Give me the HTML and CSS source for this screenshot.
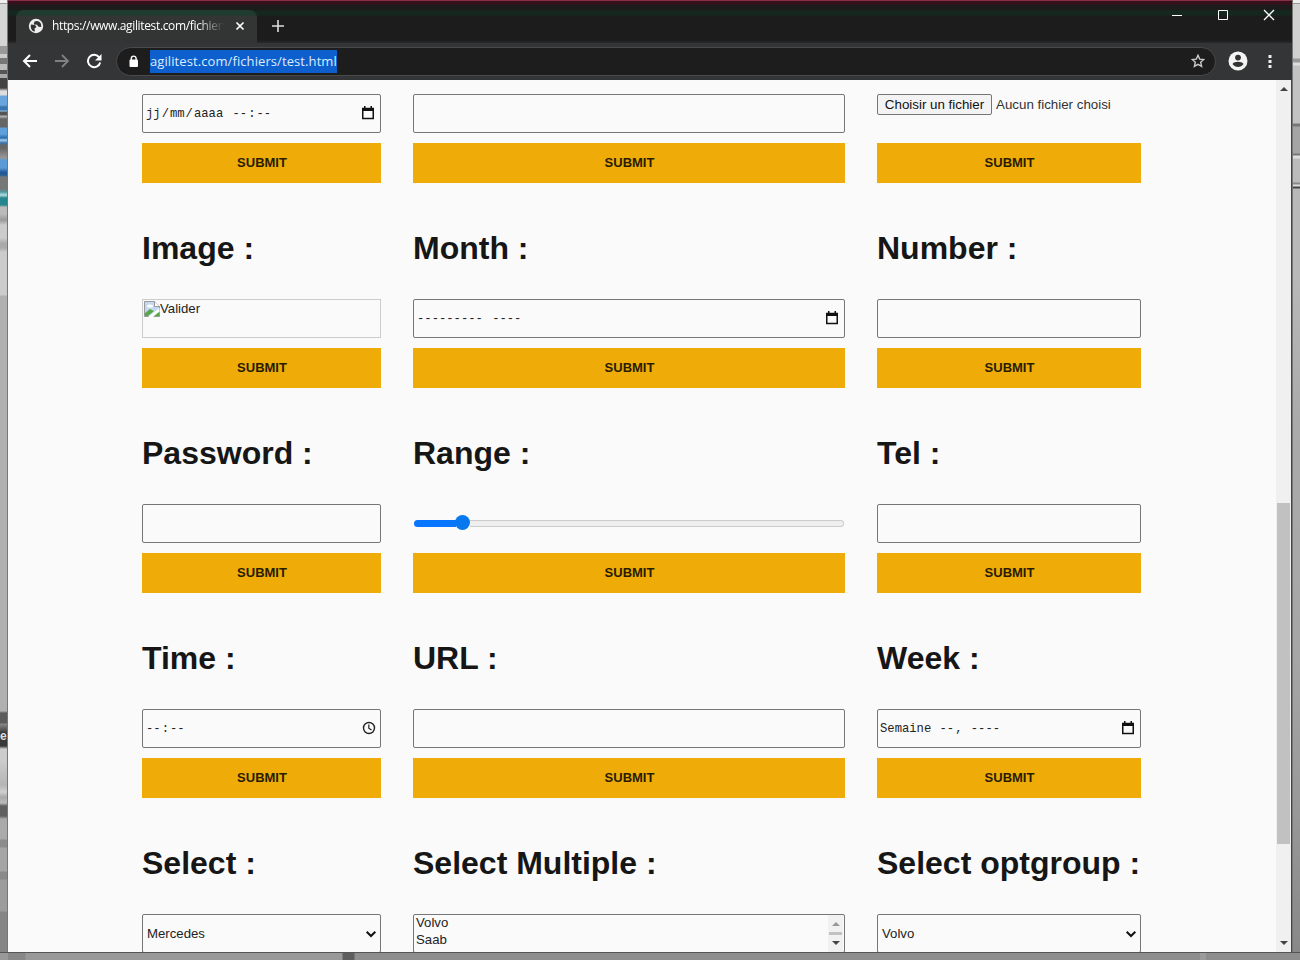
FILE: index.html
```html
<!DOCTYPE html>
<html lang="fr">
<head>
<meta charset="utf-8">
<title>https://www.agilitest.com/fichiers/test.html</title>
<link rel="stylesheet" href="styles.css">
</head>
<body>
<div class="desk">
  <div class="side side-left"><span class="side-letter">e</span></div>
  <div class="window">
    <header class="tabstrip">
      <div class="tab">
        <svg class="globe" width="16" height="16" viewBox="0 0 16 16"><circle cx="8" cy="8" r="7.200" fill="#eee"/><path d="M3 6.500l4 .5 1.500 2-2 1.500.5 3C4 13.500 2 10 3 6.500zM6.500 3.500c2.500-1.500 5.500 0 6.500 2.500l.3 3-2.800-.3-1.500-2-3-.2c-.5-1.500.5-1.700.5-3z" fill="#333"/></svg>
        <span class="tab-title">https://www.agilitest.com/fichiers</span>
        <svg class="tab-close" width="10" height="10" viewBox="0 0 10 10"><path d="M1.500 1.500l7 7M8.500 1.500l-7 7" stroke="#fff" stroke-width="1.700"/></svg>
      </div>
      <svg class="new-tab" width="14" height="14" viewBox="0 0 14 14"><path d="M7 1v12M1 7h12" stroke="#ddd" stroke-width="1.600"/></svg>
      <div class="controls">
        <svg width="12" height="12" viewBox="0 0 12 12"><path d="M1 6.500h10" stroke="#fff"/></svg>
        <svg width="12" height="12" viewBox="0 0 12 12"><path d="M1.500 1.500h9v9h-9z" stroke="#fff" fill="none"/></svg>
        <svg width="12" height="12" viewBox="0 0 12 12"><path d="M1 1l10 10M11 1L1 11" stroke="#fff" stroke-width="1.300"/></svg>
      </div>
    </header>
    <div class="toolbar">
      <svg class="nav" width="16" height="16" viewBox="0 0 16 16"><path d="M15 8H2M8 2L2 8l6 6" stroke="#fff" stroke-width="2" fill="none"/></svg>
      <svg class="nav" width="16" height="16" viewBox="0 0 16 16"><path d="M1 8h13M8 2l6 6-6 6" stroke="#808182" stroke-width="1.800" fill="none"/></svg>
      <svg class="nav" width="16" height="16" viewBox="0 0 16 16"><path d="M13.300 4.500A6.200 6.200 0 1 0 14.200 9.500" stroke="#fff" stroke-width="2" fill="none"/><path d="M15.500 1v6.500H9z" fill="#fff"/></svg>
      <div class="omnibox">
        <svg width="10" height="13" viewBox="0 0 10 13"><rect x=".5" y="4.500" width="8.500" height="7.500" rx="1" fill="#fff"/><path d="M2.300 5V3.500a2.400 2.400 0 0 1 4.800 0V5" stroke="#fff" stroke-width="1.400" fill="none"/></svg>
        <span class="address">agilitest.com/fichiers/test.html</span>
        <svg class="star" width="14" height="14" viewBox="0 0 14 14"><path d="M7 1.300l1.700 3.800 4.100.4-3.100 2.800.9 4.100L7 10.300l-3.600 2.100.9-4.100L1.200 5.500l4.100-.4z" fill="none" stroke="#ccc" stroke-width="1.400"/></svg>
      </div>
      <svg class="profile" width="20" height="20" viewBox="0 0 20 20"><circle cx="10" cy="10" r="9.500" fill="#f4f4f4"/><circle cx="10" cy="6.600" r="2.900" fill="#333"/><path d="M4.500 13c1.500-3 9.500-3 11 0-2.500 4-8.500 4-11 0z" fill="#333"/></svg>
      <svg class="kebab" width="4" height="16" viewBox="0 0 4 16"><path d="M.5 2h3v3h-3zM.5 7h3v3h-3zM.5 12h3v3h-3z" fill="#eee"/></svg>
    </div>
    <div class="viewport">
      <main class="grid">
        <section class="cell cell-first">
          <div class="field mono"><span><i>jj</i>/<i>mm</i>/<i>aaaa</i> <i>--</i>:<i>--</i></span><svg class="ico" width="14" height="14" viewBox="0 0 14 14"><path d="M1.750 2.500h10.500v10H1.750z" fill="none" stroke="#111" stroke-width="1.500"/><path d="M1 2h12v3H1zM3 0h1.500v2H3zM9.500 0H11v2H9.500z" fill="#111"/></svg></div>
          <div class="submit">SUBMIT</div>
        </section>
        <section class="cell cell-first"><div class="field"></div><div class="submit">SUBMIT</div></section>
        <section class="cell cell-first">
          <div class="file"><span class="file-button">Choisir un fichier</span><span>Aucun fichier choisi</span></div>
          <div class="submit">SUBMIT</div>
        </section>

        <section class="cell"><h1>Image :</h1>
          <div class="field broken"><svg width="16" height="16" viewBox="0 0 16 16"><path d="M.5.500h10l5 5v10H.5z" fill="#c3d9f3" stroke="#999"/><path d="M10.500.500v5h5" fill="#fff" stroke="#999"/><ellipse cx="6" cy="5" rx="3" ry="1.500" fill="#fff"/><path d="M1 15v-3l5-4 4 2-6 5z" fill="#57a849"/><path d="M4 16L15.500 7v4L9 16z" fill="#fff"/><path d="M10 15l5-4v4z" fill="#57a849"/></svg><span>Valider</span></div>
          <div class="submit">SUBMIT</div></section>
        <section class="cell"><h1>Month :</h1>
          <div class="field mono"><span><i>---------</i> <i>----</i></span><svg class="ico" width="14" height="14" viewBox="0 0 14 14"><path d="M1.750 2.500h10.500v10H1.750z" fill="none" stroke="#111" stroke-width="1.500"/><path d="M1 2h12v3H1zM3 0h1.500v2H3zM9.500 0H11v2H9.500z" fill="#111"/></svg></div>
          <div class="submit">SUBMIT</div></section>
        <section class="cell"><h1>Number :</h1><div class="field"></div><div class="submit">SUBMIT</div></section>

        <section class="cell"><h1>Password :</h1><div class="field"></div><div class="submit">SUBMIT</div></section>
        <section class="cell"><h1>Range :</h1>
          <div class="range"><div class="range-fill"></div><div class="range-thumb"></div><div class="range-rest"></div></div>
          <div class="submit">SUBMIT</div></section>
        <section class="cell"><h1>Tel :</h1><div class="field"></div><div class="submit">SUBMIT</div></section>

        <section class="cell"><h1>Time :</h1>
          <div class="field mono"><span><i>--</i>:<i>--</i></span><svg class="ico clock" width="14" height="14" viewBox="0 0 14 14"><circle cx="7" cy="7" r="5.500" fill="none" stroke="#222" stroke-width="1.400"/><path d="M6.800 3.500v3.700l2.700 1.800" fill="none" stroke="#222" stroke-width="1.200"/></svg></div>
          <div class="submit">SUBMIT</div></section>
        <section class="cell"><h1>URL :</h1><div class="field"></div><div class="submit">SUBMIT</div></section>
        <section class="cell"><h1>Week :</h1>
          <div class="field mono"><span>Semaine <i>--</i>, <i>----</i></span><svg class="ico" width="14" height="14" viewBox="0 0 14 14"><path d="M1.750 2.500h10.500v10H1.750z" fill="none" stroke="#111" stroke-width="1.500"/><path d="M1 2h12v3H1zM3 0h1.500v2H3zM9.500 0H11v2H9.500z" fill="#111"/></svg></div>
          <div class="submit">SUBMIT</div></section>

        <section class="cell"><h1>Select :</h1>
          <div class="field select"><span>Mercedes</span><svg width="12" height="8" viewBox="0 0 12 8"><path d="M1.700 1.700L6 6l4.300-4.300" fill="none" stroke="#111" stroke-width="2"/></svg></div></section>
        <section class="cell"><h1>Select Multiple :</h1>
          <div class="field list"><div class="options"><span>Volvo</span><span>Saab</span><span>Mercedes</span></div>
            <div class="list-bar"><b class="up dim"></b><b class="list-thumb"></b><b class="down"></b></div></div></section>
        <section class="cell"><h1>Select optgroup :</h1>
          <div class="field select"><span>Volvo</span><svg width="12" height="8" viewBox="0 0 12 8"><path d="M1.700 1.700L6 6l4.300-4.300" fill="none" stroke="#111" stroke-width="2"/></svg></div></section>
      </main>
      <div class="scrollbar"><b class="up"></b><b class="thumb"></b><b class="down"></b></div>
    </div>
  </div>
  <div class="side side-right"></div>
  <div class="bottom"></div>
</div>
</body>
</html>
```
FILE: styles.css
```css
* { box-sizing: border-box; }
body { margin: 0; font-family: "Liberation Sans", Arial, sans-serif; overflow: hidden; }
svg { display: block; flex: none; }
.desk { display: grid; grid-template-columns: 8px 1284px 8px; grid-template-rows: 952px 8px; width: 1300px; height: 960px; }

/* slivers of the windows behind */
.side-left {
  padding-top: 729px;
  border-right: 1px solid #777;
  background: linear-gradient(#eee 0 3px, #999 3px 4px, #d5d5d5 4px 46px, #999 46px 54px, #ccc 54px 58px, #777 58px 64px, #bbb 64px 70px, #555 70px 74px, #aaa 74px 78px, #444 78px 88px, #ddd 91px 95px, #69a4dc 96px 105px, #3a74ac 107px 110px, #9bc8ee 111px, #555 112px 115px, #bbb 116px, #666 119px 127px, #5f9fdb 128px 134px, #2869aa 138px, #a6cdec 140px, #3774ad 143px, #666 145px 148px, #999 158px, #5a9ad5 160px 168px, #225c98 172px 175px, #777 177px 189px, #4e9aa0 192px, #b4dfe0 195px, #26868e 198px 205px, #bbb 207px 214px, #999 220px, #ccc 225px 238px, #aaa 243px 248px, #ccc 252px 295px, #b0b0b0 296px 711px, #5c5c5c 713px 723px, #888 724px, #383838 733px 746px, #ccc 749px 760px, #b5b5b5 785px, #d0d0d0 792px, #aaa 797px, #bbb 803px, #606060 806px 816px, #aaa 819px 839px, #8c8c8c 840px 847px, #a5a5a5 848px 871px, #8a8a8a 872px 879px, #9c9c9c 880px 911px, #858585 912px);
}
.side-letter { display: block; font: bold 12px/14px "Liberation Sans", sans-serif; color: #ddd; }
.side-right {
  border-left: 1px solid #777;
  background: linear-gradient(#eee 0 3px, #999 3px 4px, #d0d0d0 4px 58px, #999 59px 62px, #ddd 63px 65px, #c2c2c2 66px 123px, #777 124px 126px, #a5a5a5 127px 153px, #777 154px 155px, #ddd 156px 158px, #bbb 159px 182px, #888 183px 184px, #ddd 185px 186px, #444 187px 188px, #b8b8b8 189px 280px, #aaa 420px, #a6a6a6 650px, #999 800px, #888 952px);
}
.bottom { grid-column: 1 / -1; border-top: 1px solid #555; background: linear-gradient(90deg, #999 0 8px, #888 8px 25px, #999 26px 342px, #5e5e5e 343px 354px, #8e8e8e 355px 1200px, #9b9b9b 1200px 1206px, #8d8d8d 1206px); }

/* browser chrome */
.window { display: flex; flex-direction: column; min-width: 0; }
.tabstrip { height: 43px; flex: none; display: flex; padding: 10px 17px 0 8px; background: linear-gradient(#86304a 0 1px, #37101c 1px 4px, #1d1c1c 5px 10px, #152820 11px 15px, #1c1c1c 16px 40px, #2a2a2a 43px); }
.tab { width: 241px; height: 33px; display: flex; align-items: center; padding: 0 12px 1px; border-radius: 8px 8px 0 0; background: linear-gradient(#203b30 0 5px, #333434 6px); color: #fff; }
.tab-title { width: 172px; margin: 0 11px 0 8px; overflow: hidden; white-space: nowrap; font: 12px/18px "Open Sans", sans-serif; letter-spacing: -.35px; -webkit-mask-image: linear-gradient(90deg, #000 145px, transparent 172px); }
.new-tab { margin: 9px 0 0 14px; }
.controls { display: flex; gap: 34px; margin-left: auto; margin-top: -1px; }
.toolbar { height: 37px; flex: none; display: flex; align-items: center; padding: 0 0 1px 14px; background: #343536; }
.nav { margin-right: 16px; }
.omnibox { width: 1100px; height: 29px; margin-left: -2px; padding: 0 10px 0 12px; display: flex; align-items: center; border: 1px solid #4a4a4a; border-radius: 15px; background: #1d1d1d; }
.address { margin-left: 11px; width: 187px; height: 23px; background: #0d5fcd; color: #dcecff; font: 13px/22px "Open Sans", sans-serif; letter-spacing: .09px; white-space: nowrap; }
.star { margin-left: auto; }
.profile { margin-left: 12px; }
.kebab { margin-left: 20px; }

/* page */
.viewport { height: 872px; overflow: hidden; display: flex; justify-content: space-between; background: #fafafa; border-right: 1px solid #444; }
.grid { display: grid; grid-template-columns: 239px 432px 264px; grid-auto-rows: 205px; grid-template-rows: 103px; column-gap: 32px; align-content: start; padding-left: 134px; }
.cell { display: flex; flex-direction: column; }
.cell-first { padding-top: 14px; }
h1 { height: 116px; flex: none; margin: 0; padding-top: 46px; font-size: 32px; line-height: 38px; color: #161616; white-space: nowrap; }
.field { height: 39px; flex: none; display: flex; align-items: center; justify-content: space-between; border: 1px solid #767676; border-radius: 2px; padding: 0 2px; font-size: 13.2px; color: #222; }
.submit { height: 40px; flex: none; margin-top: 10px; padding-left: 1px; background: #efab08; color: #2a1c00; font-size: 13px; font-weight: bold; line-height: 39px; text-align: center; }
.mono { font-family: "Liberation Mono", monospace; font-size: 12.2px; white-space: pre; }
.mono i { font-style: normal; padding: 0 1px; }
.ico { margin: 0 3px 2px 0; }
.clock { margin-right: 2px; }
.file { height: 39px; display: flex; gap: 4px; align-items: flex-start; font-size: 13.33px; line-height: 21px; color: #333; white-space: nowrap; }
.file-button { width: 115px; height: 21px; line-height: 19px; border: 1px solid #767676; border-radius: 2px; background: #f3f3f3; color: #111; text-align: center; }
.broken { border-color: #ccc; border-radius: 0; align-items: flex-start; justify-content: flex-start; padding: 1px; }
.range { height: 39px; display: flex; align-items: center; padding: 0 1px; }
.range-fill { width: 42px; height: 7px; border-radius: 4px 0 0 4px; background: #0875ff; }
.range-thumb { width: 15px; height: 15px; margin: -2px 0 0 -1px; border-radius: 50%; background: #0878f0; }
.range-rest { flex: 1; height: 7px; border: 1px solid #ccc; border-left: 0; border-radius: 0 4px 4px 0; background: #efefef; }
.select { padding: 0 3px 0 4px; }
.list { align-items: stretch; padding: 0 1px 0 2px; overflow: hidden; }
.options { display: flex; flex-direction: column; line-height: 17px; margin-top: -1px; }
.list-bar { width: 15px; background: #f1f1f1; display: flex; flex-direction: column; align-items: center; justify-content: space-between; padding: 7px 0 7px; }
.list-thumb { width: 13px; height: 3px; background: #c1c1c1; }
.up, .down { width: 0; height: 0; border: 4px solid transparent; }
.up { border-top: 0; border-bottom-color: #444; }
.down { border-bottom: 0; border-top-color: #444; }
.dim { border-bottom-color: #999; }
.scrollbar { width: 15px; background: #f0f0f0; display: flex; flex-direction: column; align-items: center; padding: 7px 0; }
.scrollbar .thumb { width: 13px; height: 341px; margin-top: 412px; background: #c1c1c1; }
.scrollbar .down { margin-top: auto; }
```
